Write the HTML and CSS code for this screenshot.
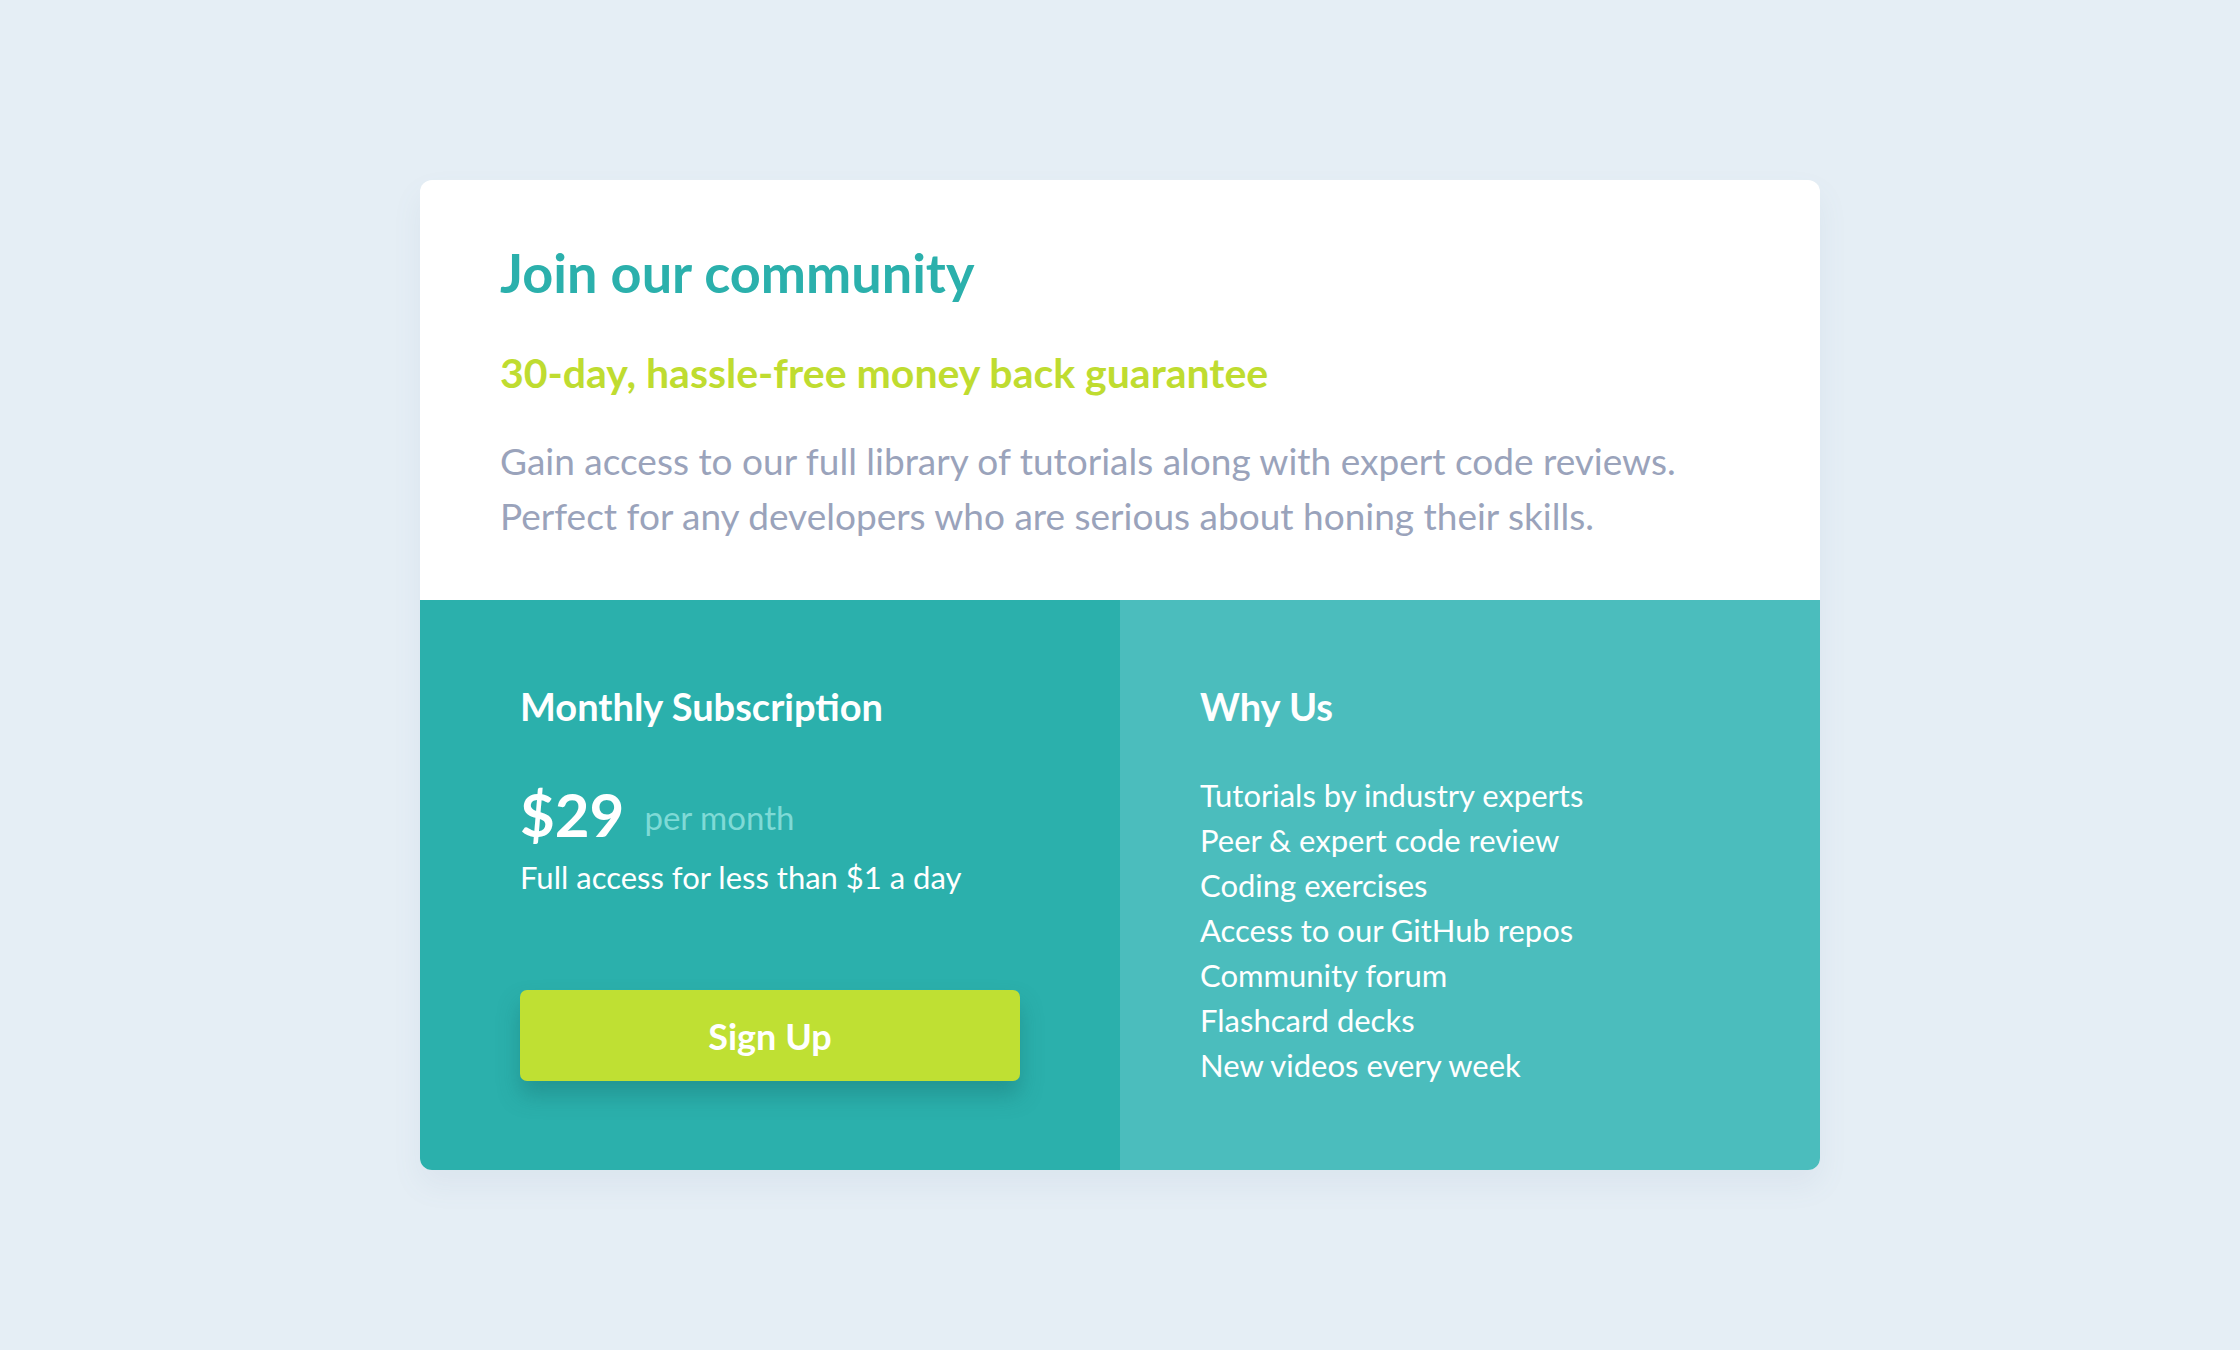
FILE: index.html
```html
<!DOCTYPE html>
<html lang="en">
<head>
<meta charset="utf-8">
<title>Single price grid</title>
<link rel="stylesheet" href="styles.css">
</head>
<body>
<main class="card">
  <section class="intro">
    <h1 class="title">Join our community</h1>
    <p class="guarantee">30-day, hassle-free money back guarantee</p>
    <p class="desc">Gain access to our full library of tutorials along with expert code reviews.<br>Perfect for any developers who are serious about honing their skills.</p>
  </section>
  <div class="bottom">
    <section class="subscription">
      <h2 class="col-title">Monthly Subscription</h2>
      <div class="price"><span class="amount">$29</span><span class="period">per month</span></div>
      <p class="access">Full access for less than $1 a day</p>
      <button class="signup">Sign Up</button>
    </section>
    <section class="why">
      <h2 class="col-title">Why Us</h2>
      <ul class="features">
        <li>Tutorials by industry experts</li>
        <li>Peer &amp; expert code review</li>
        <li>Coding exercises</li>
        <li>Access to our GitHub repos</li>
        <li>Community forum</li>
        <li>Flashcard decks</li>
        <li>New videos every week</li>
      </ul>
    </section>
  </div>
</main>
</body>
</html>
```
FILE: styles.css
```css
* { box-sizing: border-box; }
html, body { margin: 0; padding: 0; }
body {
  background: #e5eef5;
  font-family: Lato, "Open Sans", sans-serif;
  height: 100vh;
  display: flex;
  align-items: center;
  justify-content: center;
}
.card {
  width: 1400px;
  height: 990px;
  background: #fff;
  border-radius: 12px;
  overflow: hidden;
  display: flex;
  flex-direction: column;
  box-shadow: 0 15px 30px rgba(100, 130, 170, 0.08);
}
.intro {
  height: 420px;
  padding: 63px 80px 0 80px;
}
.title {
  margin: 0;
  font-size: 54px;
  line-height: 60px;
  font-weight: 700;
  color: #2bb0ac;
}
.guarantee {
  margin: 48px 0 0 0;
  font-size: 41px;
  line-height: 44px;
  font-weight: 700;
  color: #bfdc30;
}
.desc {
  margin: 38px 0 0 0;
  font-size: 37px;
  line-height: 55px;
  color: #9aa3bb;
}
.bottom {
  flex: 1;
  display: grid;
  grid-template-columns: 1fr 1fr;
  color: #fff;
}
.subscription {
  background: #2bb0ac;
  padding: 86px 100px 0 100px;
}
.why {
  background: #4bbdbd;
  padding: 86px 80px 0 80px;
}
.col-title {
  margin: 0;
  font-size: 38px;
  line-height: 40px;
  font-weight: 700;
}
.price {
  margin-top: 58px;
  height: 60px;
  display: flex;
  align-items: center;
  gap: 20px;
}
.amount {
  font-size: 60px;
  font-weight: 700;
  line-height: 60px;
}
.period {
  font-size: 33px;
  color: #7fdad6;
  padding-top: 6px;
}
.access {
  margin: 13px 0 0 0;
  font-size: 31px;
  line-height: 40px;
}
.signup {
  margin-top: 93px;
  width: 500px;
  height: 91px;
  border: none;
  border-radius: 7px;
  background: #bfe033;
  color: #fff;
  font-family: inherit;
  font-size: 36px;
  font-weight: 700;
  box-shadow: 0 14px 22px rgba(20, 100, 100, 0.35);
}
.features {
  list-style: none;
  margin: 47px 0 0 0;
  padding: 0;
}
.features li {
  font-size: 31px;
  line-height: 45px;
}
```
